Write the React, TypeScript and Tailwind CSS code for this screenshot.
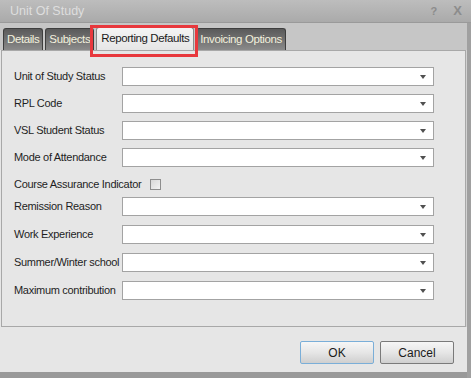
import React from 'react';

const font = { fontFamily: '"Liberation Sans", Arial, sans-serif' };

function Combo() {
  return (
    <div className="relative h-[19px] w-[312px] border border-[#a3a3a3] bg-white">
      <div className="absolute right-[7px] top-[7px] h-0 w-0 border-x-[3.5px] border-t-[4px] border-x-transparent border-t-[#505050]" />
    </div>
  );
}

function Row({ label, className = '' }: { label: string; className?: string }) {
  return (
    <div className={`flex items-center ${className}`}>
      <div className="w-[108px] whitespace-nowrap text-[11px] tracking-[-0.3px] text-[#1e1e1e]">{label}</div>
      <Combo />
    </div>
  );
}

function Tab({ label, active = false }: { label: string; active?: boolean }) {
  return active ? (
    <div className="flex h-[23px] items-center rounded-t-[3px] border border-b-0 border-[#8a8a8a] bg-gradient-to-b from-[#f4f4f4] to-[#e6e6e6] px-[4px] text-[11.5px] tracking-[-0.4px] text-[#1a1a1a]">
      {label}
    </div>
  ) : (
    <div className="mt-[1px] flex h-[22px] items-center rounded-t-[3px] border border-b-0 border-[#3e3e3e] bg-gradient-to-b from-[#5a5a5a] to-[#8a8a8a] px-[3px] text-[11.5px] tracking-[-0.4px] text-[#f3f1de]">
      {label}
    </div>
  );
}

export default function App() {
  return (
    <div style={font} className="relative flex h-[378px] w-[471px] flex-col overflow-hidden bg-[#e6e6e6]">
      {/* title bar */}
      <div className="flex h-[23px] items-center justify-between border-b border-[#9a9a9a] bg-gradient-to-b from-[#bdbdbd] to-[#aaaaaa] pl-[10px] pr-[9px]">
        <span className="text-[12.5px] text-[#dedede]">Unit Of Study</span>
        <div className="flex items-center gap-[16px] text-[#8c8c8c]">
          <span className="text-[11px] font-bold">?</span>
          <span className="text-[13px] font-bold">X</span>
        </div>
      </div>

      {/* tabs */}
      <div className="flex items-end gap-[2px] bg-[#c6c6c6] pl-[3px] pt-[4px]">
        <Tab label="Details" />
        <Tab label="Subjects" />
        <Tab label="Reporting Defaults" active />
        <Tab label="Invoicing Options" />
      </div>

      {/* panel */}
      <div className="flex">
        <div className="ml-[1px] h-[277px] w-[465px] border border-[#a8a8a8] bg-[#e6e6e6] pl-[12px] pt-[16px]">
          <Row label="Unit of Study Status" />
          <Row label="RPL Code" className="mt-[8px]" />
          <Row label="VSL Student Status" className="mt-[8px]" />
          <Row label="Mode of Attendance" className="mt-[8px]" />
          <div className="mt-[8px] flex h-[18px] items-center">
            <span className="text-[11px] tracking-[-0.3px] text-[#1e1e1e]">Course Assurance Indicator</span>
            <div className="ml-[9px] h-[11px] w-[11px] border border-[#8e8e8e] bg-gradient-to-br from-[#d8d8d8] to-[#f4f4f4]" />
          </div>
          <Row label="Remission Reason" className="mt-[4px]" />
          <Row label="Work Experience" className="mt-[9px]" />
          <Row label="Summer/Winter school" className="mt-[9px]" />
          <Row label="Maximum contribution" className="mt-[9px]" />
        </div>
        <div className="w-[2px] bg-[#d2d2d2]" />
      </div>

      {/* buttons */}
      <div className="flex justify-end gap-[6px] pr-[17px] pt-[14px]">
        <button className="h-[23px] w-[74px] rounded-[2px] border border-[#7aaed8] bg-gradient-to-b from-[#f6f6f6] via-[#e6e6e6] to-[#cfcfcf] text-[12px] text-[#1a1a1a]">
          OK
        </button>
        <button className="h-[23px] w-[74px] rounded-[2px] border border-[#7a7a7a] bg-gradient-to-b from-[#f6f6f6] via-[#e6e6e6] to-[#cfcfcf] text-[12px] text-[#1a1a1a]">
          Cancel
        </button>
      </div>

      {/* window frame */}
      <div className="absolute bottom-0 left-0 h-[6px] w-full bg-[#999999]" />
      <div className="absolute right-0 top-[23px] h-full w-[4px] bg-[#a0a0a0]" />

      {/* annotation highlight */}
      <div className="absolute left-[90px] top-[25px] h-[32px] w-[108px] border-[3px] border-[#e8383d]" />
    </div>
  );
}
